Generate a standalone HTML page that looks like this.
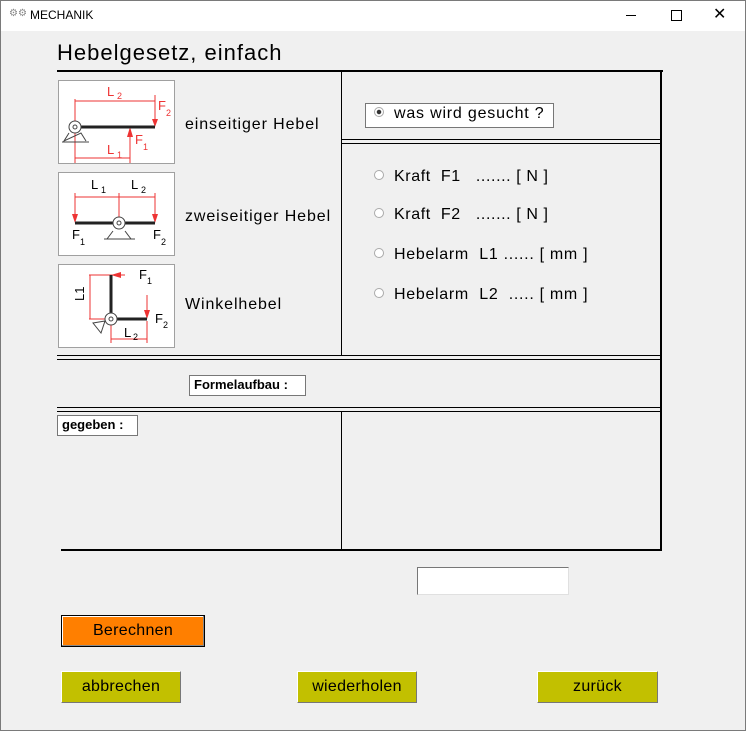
<!DOCTYPE html>
<html><head><meta charset="utf-8"><style>
body{margin:0;width:746px;height:731px;background:#f0f0f0;font-family:"Liberation Sans",Arial,sans-serif;position:relative;overflow:hidden}
.a{position:absolute}
.win{left:0;top:0;width:744px;height:729px;border:1px solid #7a7a7a}
.tb{left:1px;top:1px;width:744px;height:30px;background:#fff}
.hl{position:absolute;background:#000;height:1px}
.vl{position:absolute;background:#000;width:1px}
.img{position:absolute;width:115px;height:82px;background:#fff;border:1px solid #a0a0a0}
.lbl{position:absolute;font-size:16px;letter-spacing:0.9px;color:#000}
.rad{position:absolute;font-size:16px;letter-spacing:0.8px;color:#000;white-space:pre}
.rad i{display:inline-block;width:8px;height:8px;border:1px solid #aaa;border-radius:50%;background:#fff;margin-right:10px;vertical-align:1px}
.box{position:absolute;background:#fff;border:1px solid #777;font-weight:bold;font-size:13px;box-sizing:border-box;padding-left:4px;line-height:18px}
.btn{position:absolute;box-sizing:border-box;border:1px solid;border-color:#fff #777 #777 #fff;background:#c2c000;text-align:center;font-size:16px;letter-spacing:0.3px;line-height:30px}
</style></head><body>
<div class="a win"></div>
<div class="a tb"></div>
<div class="a" style="left:9px;top:8px;font-size:10px;color:#888">⚙⚙</div>
<div class="a" style="left:30px;top:8px;font-size:12px;color:#000">MECHANIK</div>
<div class="a" style="left:626px;top:15px;width:10px;height:1px;background:#000"></div>
<div class="a" style="left:671px;top:10px;width:9px;height:9px;border:1px solid #000"></div>
<div class="a" style="left:713px;top:4px;font-size:16px">✕</div>

<div class="a" style="left:57px;top:40px;font-size:22px;letter-spacing:1px">Hebelgesetz, einfach</div>

<div class="hl" style="left:57px;top:70px;width:606px;height:2px"></div>
<div class="vl" style="left:660px;top:70px;height:481px;width:2px"></div>
<div class="vl" style="left:341px;top:72px;height:283px"></div>
<div class="hl" style="left:342px;top:139px;width:318px"></div>
<div class="hl" style="left:342px;top:143px;width:318px"></div>
<div class="hl" style="left:57px;top:355px;width:603px"></div>
<div class="hl" style="left:57px;top:359px;width:603px"></div>
<div class="hl" style="left:57px;top:407px;width:603px"></div>
<div class="hl" style="left:57px;top:411px;width:603px"></div>
<div class="vl" style="left:341px;top:411px;height:139px"></div>
<div class="hl" style="left:61px;top:549px;width:601px;height:2px"></div>

<div class="img" style="left:58px;top:80px">
<svg width="115" height="82" font-family="Liberation Sans" font-size="13" fill="#e33">
<g stroke="#e33" stroke-width="1"><line x1="16" y1="20" x2="96" y2="20"/><line x1="16" y1="18" x2="16" y2="82"/><line x1="16" y1="77" x2="71" y2="77"/><line x1="71" y1="60" x2="71" y2="82"/><line x1="96" y1="14" x2="96" y2="42"/><line x1="71" y1="48" x2="71" y2="62"/></g>
<polygon points="93,38 99,38 96,46"/><polygon points="68,56 74,56 71,46"/>
<text x="48" y="15">L</text><text x="58" y="18" font-size="9">2</text>
<text x="99" y="29">F</text><text x="107" y="35" font-size="9">2</text>
<text x="76" y="63">F</text><text x="84" y="69" font-size="9">1</text>
<text x="48" y="73">L</text><text x="58" y="77" font-size="9">1</text>
<line x1="20" y1="46" x2="96" y2="46" stroke="#222" stroke-width="3"/>
<circle cx="16" cy="46" r="6" fill="#fff" stroke="#444"/><circle cx="16" cy="46" r="2" fill="none" stroke="#444"/>
<polyline points="10,52 5,60 22,52 27,60" fill="none" stroke="#444"/><line x1="3" y1="61" x2="30" y2="61" stroke="#444"/>
</svg></div>

<div class="img" style="left:58px;top:172px">
<svg width="115" height="82" font-family="Liberation Sans" font-size="13" fill="#e33">
<g stroke="#e33"><line x1="16" y1="24" x2="96" y2="24"/><line x1="16" y1="20" x2="16" y2="42"/><line x1="96" y1="20" x2="96" y2="42"/><line x1="60" y1="20" x2="60" y2="46"/></g>
<polygon points="13,41 19,41 16,50"/><polygon points="93,41 99,41 96,50"/>
<text x="32" y="16" fill="#000">L</text><text x="42" y="20" font-size="9" fill="#000">1</text>
<text x="72" y="16" fill="#000">L</text><text x="82" y="20" font-size="9" fill="#000">2</text>
<text x="13" y="66" fill="#000">F</text><text x="21" y="72" font-size="9" fill="#000">1</text>
<text x="94" y="66" fill="#000">F</text><text x="102" y="72" font-size="9" fill="#000">2</text>
<line x1="16" y1="50" x2="96" y2="50" stroke="#222" stroke-width="3"/>
<circle cx="60" cy="50" r="6" fill="#fff" stroke="#444"/><circle cx="60" cy="50" r="2" fill="none" stroke="#444"/>
<polyline points="54,58 48,66 72,66 66,58" fill="none" stroke="#444"/><line x1="45" y1="66" x2="76" y2="66" stroke="#444"/>
</svg></div>

<div class="img" style="left:58px;top:264px">
<svg width="115" height="82" font-family="Liberation Sans" font-size="13" fill="#000">
<g stroke="#e33"><line x1="30" y1="10" x2="52" y2="10"/><line x1="31" y1="10" x2="31" y2="54"/><line x1="30" y1="54" x2="48" y2="54"/><line x1="52" y1="58" x2="52" y2="78"/><line x1="52" y1="74" x2="88" y2="74"/><line x1="88" y1="56" x2="88" y2="78"/><line x1="52" y1="10" x2="66" y2="10"/><line x1="88" y1="30" x2="88" y2="46"/></g>
<polygon points="52,10 62,7 62,13" fill="#e33"/><polygon points="85,45 91,45 88,54" fill="#e33"/>
<text x="80" y="14">F</text><text x="88" y="19" font-size="9">1</text>
<text x="96" y="58">F</text><text x="104" y="63" font-size="9">2</text>
<text x="65" y="72">L</text><text x="74" y="75" font-size="9">2</text>
<text transform="translate(25,36) rotate(-90)">L1</text>
<line x1="52" y1="10" x2="52" y2="54" stroke="#222" stroke-width="3"/>
<line x1="52" y1="54" x2="88" y2="54" stroke="#222" stroke-width="3"/>
<circle cx="52" cy="54" r="6" fill="#fff" stroke="#444"/><circle cx="52" cy="54" r="2" fill="none" stroke="#444"/>
<polygon points="46,56 34,58 42,68" fill="#fff" stroke="#444"/>
</svg></div>

<div class="lbl" style="left:185px;top:116px">einseitiger Hebel</div>
<div class="lbl" style="left:185px;top:208px">zweiseitiger Hebel</div>
<div class="lbl" style="left:185px;top:296px">Winkelhebel</div>

<div class="a" style="left:365px;top:103px;width:187px;height:23px;background:#fff;border:1px solid #777"></div>
<div class="rad" style="left:374px;top:105px"><i style="background:radial-gradient(#333 2px,#fff 2.5px)"></i>was wird gesucht ?</div>
<div class="rad" style="left:374px;top:168px;letter-spacing:0.6px"><i></i>Kraft  F1   ....... [ N ]</div>
<div class="rad" style="left:374px;top:206px;letter-spacing:0.6px"><i></i>Kraft  F2   ....... [ N ]</div>
<div class="rad" style="left:374px;top:246px;letter-spacing:0.7px"><i></i>Hebelarm  L1 ...... [ mm ]</div>
<div class="rad" style="left:374px;top:286px;letter-spacing:0.7px"><i></i>Hebelarm  L2  ..... [ mm ]</div>

<div class="box" style="left:189px;top:375px;width:117px;height:21px">Formelaufbau :</div>
<div class="box" style="left:57px;top:415px;width:81px;height:21px">gegeben :</div>

<div class="a" style="left:417px;top:567px;width:150px;height:26px;background:#fff;border:1px solid;border-color:#777 #e0e0e0 #e0e0e0 #777"></div>

<div class="a" style="left:61px;top:615px;width:144px;height:32px;border:1px solid #000;background:#ff7f00;box-sizing:border-box;text-align:center;line-height:30px;font-size:16px;letter-spacing:0.3px;box-shadow:inset -1px -1px #888,inset 1px 1px #fff">Berechnen</div>
<div class="btn" style="left:61px;top:671px;width:120px;height:32px">abbrechen</div>
<div class="btn" style="left:297px;top:671px;width:120px;height:32px">wiederholen</div>
<div class="btn" style="left:537px;top:671px;width:121px;height:32px">zurück</div>
</body></html>
